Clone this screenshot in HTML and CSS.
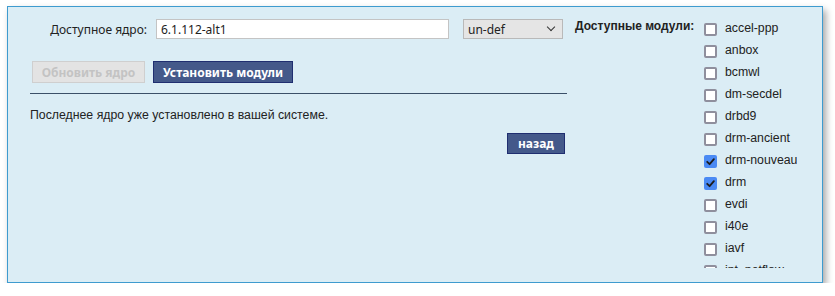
FILE: index.html
```html
<!DOCTYPE html>
<html lang="ru">
<head>
  <meta charset="UTF-8"/>
  <title>Модули ядра</title>
  <link rel="stylesheet" href="styles.css">
</head>
<body>
  <div class="panel">
    <div class="main-col">
      <div class="kernel-row">
        <label class="kernel-label" for="kernel">Доступное ядро:</label>
        <input type="text" id="kernel" class="kernel-input" value="6.1.112-alt1"/>
        <span class="select-wrap">
          <select class="flavour">
            <option>un-def</option>
          </select>
        </span>
      </div>

      <div class="button-group">
        <button class="btn" disabled>Обновить ядро</button>
        <button class="btn">Установить модули</button>
      </div>

      <hr class="divider"/>

      <p class="message">Последнее ядро уже установлено в вашей системе.</p>

      <div class="back-row">
        <button class="btn btn-back">назад</button>
      </div>
    </div>

    <div class="modules-col">
      <div class="modules-title">Доступные модули:</div>
      <div class="modules-list">
        <label class="module"><span class="box"></span><span class="name">accel-ppp</span></label>
        <label class="module"><span class="box"></span><span class="name">anbox</span></label>
        <label class="module"><span class="box"></span><span class="name">bcmwl</span></label>
        <label class="module"><span class="box"></span><span class="name">dm-secdel</span></label>
        <label class="module"><span class="box"></span><span class="name">drbd9</span></label>
        <label class="module"><span class="box"></span><span class="name">drm-ancient</span></label>
        <label class="module"><span class="box checked"><svg viewBox="0 0 13 13" width="13" height="13"><path d="M3.2 6.8 L5.6 9.2 L9.9 4.2" fill="none" stroke="#1d1d1d" stroke-width="1.8" stroke-linecap="round" stroke-linejoin="round"/></svg></span><span class="name">drm-nouveau</span></label>
        <label class="module"><span class="box checked"><svg viewBox="0 0 13 13" width="13" height="13"><path d="M3.2 6.8 L5.6 9.2 L9.9 4.2" fill="none" stroke="#1d1d1d" stroke-width="1.8" stroke-linecap="round" stroke-linejoin="round"/></svg></span><span class="name">drm</span></label>
        <label class="module"><span class="box"></span><span class="name">evdi</span></label>
        <label class="module"><span class="box"></span><span class="name">i40e</span></label>
        <label class="module"><span class="box"></span><span class="name">iavf</span></label>
        <label class="module"><span class="box"></span><span class="name">ipt_netflow</span></label>
      </div>
    </div>
  </div>
</body>
</html>
```

FILE: styles.css
```css
body {
  margin: 0;
  background: #fff;
  font-family: "Noto Sans", sans-serif;
  font-size: 12px;
  color: #222;
}

.panel {
  display: flex;
  width: 814px;
  height: 275px;
  margin: 6px 0 0 7px;
  background: #dbedf5;
  border: 1px solid #3e9bcf;
  box-shadow: 3px 4px 7px rgba(0, 0, 0, 0.35);
}

.main-col {
  width: 537px;
  padding: 12px 0 0 22px;
}

.kernel-row {
  display: flex;
  align-items: center;
  height: 20px;
}

.kernel-label {
  width: 117px;
  margin-right: 9px;
  text-align: right;
  white-space: nowrap;
}

.kernel-input {
  box-sizing: border-box;
  width: 293px;
  height: 20px;
  padding: 0 4px;
  border: 1px solid #c4c4c4;
  background: #fff;
  font-family: "Noto Sans", sans-serif;
  font-size: 12px;
  color: #222;
  outline: none;
}

.select-wrap {
  position: relative;
  margin-left: 14px;
}

.select-wrap::after {
  content: "";
  position: absolute;
  right: 9px;
  top: 5px;
  width: 5px;
  height: 5px;
  border-right: 1.3px solid #333;
  border-bottom: 1.3px solid #333;
  transform: rotate(45deg);
  pointer-events: none;
}

.flavour {
  appearance: none;
  box-sizing: border-box;
  width: 100px;
  height: 20px;
  padding: 0 4px;
  border: 1px solid #b9b9b9;
  border-radius: 0;
  background: #e5e5e5;
  font-family: "Noto Sans", sans-serif;
  font-size: 12px;
  color: #222;
}

.button-group {
  display: flex;
  gap: 8px;
  margin: 22px 0 0 2px;
}

.btn {
  box-sizing: border-box;
  height: 22px;
  padding: 0 9px;
  border: 1px solid #1f2e70;
  background: #44598a;
  color: #fff;
  font-family: "Noto Sans", sans-serif;
  font-size: 12px;
  font-weight: bold;
  white-space: nowrap;
  cursor: pointer;
}

.btn:disabled {
  width: 113px;
  padding: 0;
  border-color: #cfcfcf;
  background: #e3e3e3;
  color: #c3c3c3;
  cursor: default;
}

.divider {
  margin: 10px 0 0;
  border: none;
  border-top: 1px solid #3b5068;
}

.message {
  margin: 14px 0 0;
  font-family: "Liberation Sans", Arial, sans-serif;
  font-size: 12.3px;
  line-height: 14px;
}

.back-row {
  display: flex;
  justify-content: flex-end;
  margin: 11px 2px 0 0;
}

.btn-back {
  width: 58px;
  height: 21px;
  padding: 0;
}

.modules-col {
  display: flex;
  margin: 11px 0 0 8px;
  font-family: "Liberation Sans", Arial, sans-serif;
}

.modules-title {
  width: 129px;
  font-weight: bold;
  line-height: 14px;
  padding-top: 1px;
}

.modules-list {
  height: 250px;
  overflow: hidden;
}

.module {
  display: flex;
  align-items: center;
  height: 22px;
  gap: 8px;
}

.name {
  font-size: 12.3px;
  padding-bottom: 3px;
}

.box {
  box-sizing: border-box;
  width: 13px;
  height: 13px;
  border: 2px solid #8f8f9d;
  border-radius: 2px;
  background: #fff;
}

.box.checked {
  border: none;
  background: #4a8af4;
}

.box svg {
  display: block;
}
```
